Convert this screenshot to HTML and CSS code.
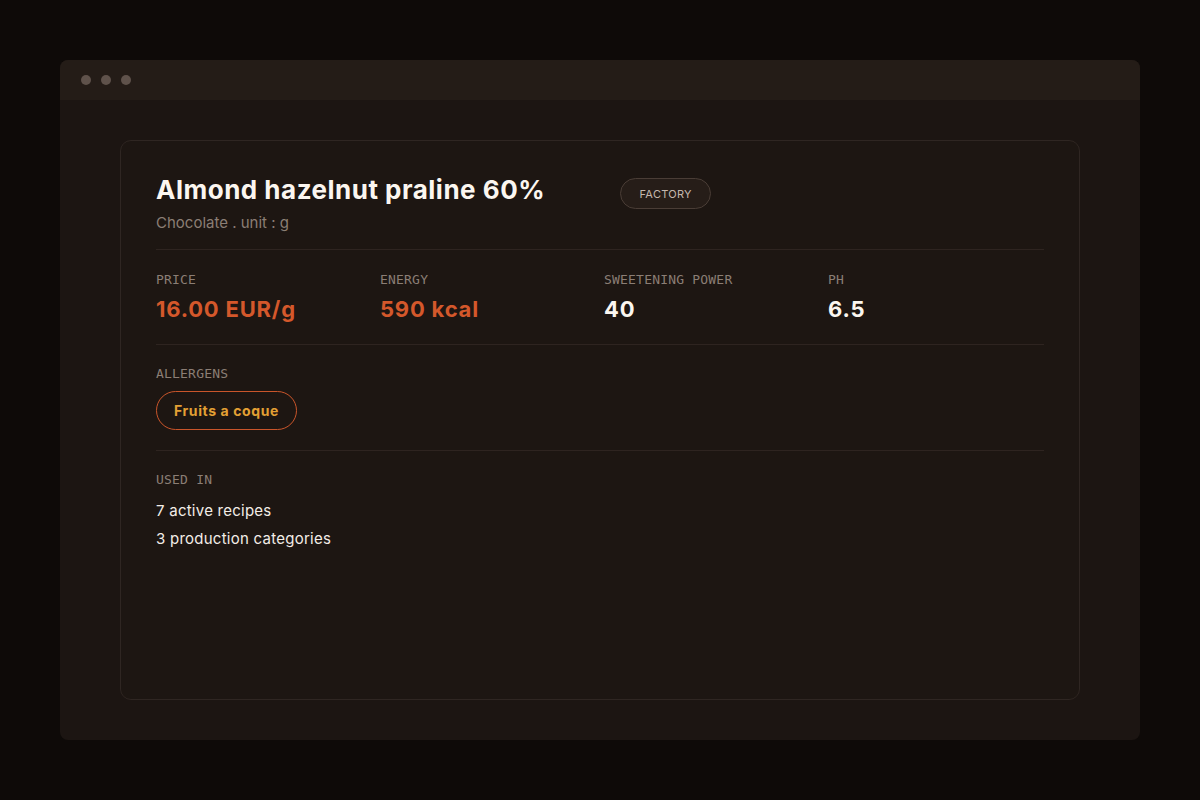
FILE: index.html
```html
<!DOCTYPE html>
<html lang="en">
<head>
<meta charset="utf-8">
<title>Almond hazelnut praline 60%</title>
<link rel="stylesheet" href="styles.css">
</head>
<body>
<div class="window">
  <div class="titlebar">
    <span class="dot"></span><span class="dot"></span><span class="dot"></span>
  </div>
  <div class="content">
    <div class="card">
      <div class="header">
        <div class="heading">
          <h1 class="title">Almond hazelnut praline 60%</h1>
          <div class="subtitle">Chocolate . unit : g</div>
        </div>
        <span class="badge">FACTORY</span>
      </div>
      <div class="stats">
        <div class="stat">
          <div class="label">PRICE</div>
          <div class="value accent">16.00 EUR/g</div>
        </div>
        <div class="stat">
          <div class="label">ENERGY</div>
          <div class="value accent">590 kcal</div>
        </div>
        <div class="stat">
          <div class="label">SWEETENING POWER</div>
          <div class="value">40</div>
        </div>
        <div class="stat">
          <div class="label">PH</div>
          <div class="value">6.5</div>
        </div>
      </div>
      <div class="section">
        <div class="label">ALLERGENS</div>
        <div class="pills"><span class="pill">Fruits a coque</span></div>
      </div>
      <div class="section last">
        <div class="label">USED IN</div>
        <div class="lines">
          <div class="line">7 active recipes</div>
          <div class="line">3 production categories</div>
        </div>
      </div>
    </div>
  </div>
</div>
</body>
</html>
```

FILE: styles.css
```css
* { box-sizing: border-box; }
html, body { margin: 0; padding: 0; }
body {
  background: #0e0a08;
  font-family: Inter, "DejaVu Sans", sans-serif;
  color: #f6f0ea;
  padding: 60px;
  height: 800px;
}
.window {
  background: #1c1512;
  border-radius: 8px;
  height: 680px;
  display: flex;
  flex-direction: column;
  overflow: hidden;
}
.titlebar {
  height: 40px;
  background: #241c17;
  display: flex;
  align-items: center;
  gap: 10px;
  padding-left: 21px;
}
.dot {
  width: 10px;
  height: 10px;
  border-radius: 50%;
  background: #5f524b;
}
.content {
  flex: 1;
  padding: 40px 60px;
}
.card {
  height: 560px;
  border: 1px solid #2f2622;
  border-radius: 11px;
  background: #1d1612;
  padding: 34px 35px 36px;
}
.header {
  display: flex;
  align-items: flex-start;
  gap: 75px;
  padding-bottom: 16px;
  border-bottom: 1px solid #2e2420;
}
.title {
  margin: 0;
  font-size: 26px;
  font-weight: 700;
  line-height: 30px;
  letter-spacing: 0.5px;
  color: #fbf6f0;
}
.subtitle {
  margin-top: 8px;
  font-size: 15px;
  line-height: 20px;
  color: #8b7e75;
}
.badge {
  margin-top: 3px;
  height: 31px;
  padding: 0 18.5px;
  border: 1px solid #4a3d36;
  border-radius: 16px;
  background: #261d18;
  color: #c4b7ad;
  font-size: 11px;
  letter-spacing: 0.3px;
  display: inline-flex;
  align-items: center;
}
.stats {
  display: grid;
  grid-template-columns: repeat(4, 1fr);
  gap: 8px;
  padding: 22px 0 21px;
  border-bottom: 1px solid #2e2420;
}
.label {
  font-family: "DejaVu Sans Mono", "Liberation Mono", monospace;
  font-size: 13px;
  line-height: 16px;
  color: #8b7e75;
  letter-spacing: 0.2px;
}
.value {
  margin-top: 7px;
  font-size: 22px;
  font-weight: 700;
  line-height: 28px;
  letter-spacing: 0.8px;
  color: #fbf6f0;
}
.value.accent { color: #d4582b; }
.section {
  padding: 21px 0 20px;
  border-bottom: 1px solid #2e2420;
}
.section.last { border-bottom: none; padding-top: 21px; }
.pills {
  margin-top: 9px;
  display: flex;
  gap: 8px;
}
.pill {
  height: 39px;
  padding: 0 17px;
  border: 1.5px solid #c9552a;
  border-radius: 20px;
  color: #e3a034;
  font-size: 14px;
  font-weight: 700;
  letter-spacing: 0.6px;
  display: inline-flex;
  align-items: center;
}
.lines {
  margin-top: 13px;
  display: flex;
  flex-direction: column;
  gap: 8px;
}
.line {
  font-size: 15px;
  line-height: 20px;
  letter-spacing: 0.25px;
  color: #f3ede7;
}
```
